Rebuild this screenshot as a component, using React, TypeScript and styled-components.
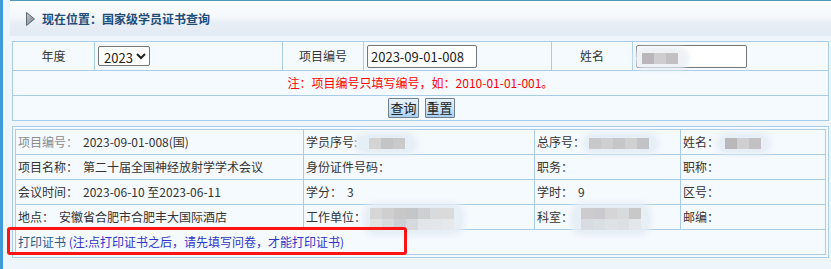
import styled, { createGlobalStyle } from 'styled-components';

const GlobalStyle = createGlobalStyle`
  html, body {
    margin: 0;
    padding: 0;
  }
  body {
    background: #eef5fb;
    font-family: "Microsoft YaHei", "Noto Sans CJK SC", "Noto Sans", sans-serif;
    font-size: 12px;
    color: #333;
  }
`;

const Page = styled.div`
  position: relative;
  min-height: 269px;
  border-left: 3px solid #3f9cd8;
  box-sizing: border-box;
`;

const Header = styled.div`
  display: flex;
  align-items: center;
  gap: 7px;
  height: 35px;
  margin-left: 7px;
  padding-left: 16px;
  border-top: 1px solid #4f9bb6;
  background: linear-gradient(to bottom, #fbfdff 0%, #f4f8fc 45%, #e8eef6 62%, #e2eaf3 100%);
`;

const Title = styled.h1`
  margin: 0;
  font-size: 12px;
  font-weight: bold;
  color: #1e4c78;
  line-height: 16px;
`;

const Content = styled.div`
  padding: 5px 2px 0 9px;
`;

const SearchTable = styled.table`
  width: 100%;
  table-layout: fixed;
  border-collapse: collapse;
  background: #f5faff;
  border: 1px solid #a9cde8;
`;

const Row = styled.tr<{ $h: number }>`
  height: ${p => p.$h}px;
`;

const Cell = styled.td<{ $align?: string }>`
  border: 1px solid #a9cde8;
  padding: 0 3px;
  text-align: ${p => p.$align || 'left'};
  line-height: 16px;
  white-space: nowrap;
  position: relative;
`;

const Note = styled.span`
  color: #ff0000;
`;

const Select = styled.select`
  height: 20px;
  font-family: inherit;
  font-size: 13px;
  color: #222;
  border: 1px solid #767676;
  border-radius: 2px;
  background: #fff;
  padding: 0 0 0 1px;
  vertical-align: middle;
`;

const TextInput = styled.input<{ $w: number }>`
  width: ${p => p.$w}px;
  height: 23px;
  box-sizing: border-box;
  font-family: inherit;
  font-size: 13px;
  color: #222;
  border: 1px solid #767676;
  border-radius: 2px;
  background: #fff;
  padding: 0 3px;
  vertical-align: middle;
`;

const ButtonRow = styled.div`
  display: flex;
  justify-content: center;
  gap: 6px;
  padding-left: 2px;
`;

const Button = styled.button`
  height: 20px;
  padding: 0 1px;
  font-family: inherit;
  font-size: 13px;
  line-height: 16px;
  color: #222;
  border: 1px solid #6f7f8f;
  border-radius: 1px;
  background: linear-gradient(to bottom, #e8f3fd 0%, #cfe5f8 50%, #a8d0f1 100%);
`;

const InfoBox = styled.div`
  margin-top: 5px;
  border: 1px solid #a9cde8;
  padding: 2px;
  background: #f5faff;
`;

const InfoTable = styled.table`
  width: 100%;
  table-layout: fixed;
  border-collapse: collapse;
  border: 1px solid #a3bccf;
`;

const InfoRow = styled.tr`
  height: 25px;
`;

const InfoCell = styled.td`
  border: 1px solid #a9cde8;
  padding: 0 2px;
  line-height: 16px;
  white-space: nowrap;
  overflow: visible;
`;

const Label = styled.span<{ $muted?: boolean }>`
  color: ${p => (p.$muted ? '#8a8a8a' : '#333')};
  margin-right: 5px;
`;

const PrintLink = styled.span`
  color: #2a5a88;
`;

const PrintNote = styled.span`
  color: #2f34c8;
`;

// privacy blur over a value; rows of grey tiles that must not push the row taller
const Mask = styled.span<{ $w: number; $pl: number; $rows?: number }>`
  display: inline-flex;
  flex-wrap: wrap;
  align-content: center;
  width: ${p => p.$w}px;
  height: ${p => (p.$rows || 1) * 11}px;
  margin: ${p => -((p.$rows || 1) * 11 - 10) / 2 - 3}px 0;
  padding: 3px 8px 3px ${p => p.$pl}px;
  vertical-align: middle;
  border-radius: 10px;
  background: rgba(230, 237, 245, 0.9);
  box-shadow: 0 0 5px 3px rgba(230, 237, 245, 0.85);
`;

const Tile = styled.i<{ $c: string }>`
  display: block;
  width: 12px;
  height: 11px;
  background: ${p => p.$c};
  filter: blur(0.4px);
`;

const NameMask = styled(Mask)`
  position: absolute;
  left: 3px;
  top: 8px;
  margin: 0;
  background: rgba(236, 241, 246, 0.9);
`;

const Highlight = styled.div`
  position: absolute;
  left: 4px;
  top: 227px;
  width: 394px;
  height: 22px;
  border: 3px solid #ff1414;
  border-radius: 3px;
  pointer-events: none;
`;

function Arrow() {
  return (
    <svg width="9" height="14" viewBox="0 0 9 14">
      <defs>
        <linearGradient id="ag" x1="0" y1="0" x2="1" y2="1">
          <stop offset="0" stopColor="#c9ced3" />
          <stop offset="1" stopColor="#6d7780" />
        </linearGradient>
      </defs>
      <path d="M0.5 0.5 L8.5 7 L0.5 13.5 Z" fill="url(#ag)" stroke="#5f6a74" strokeWidth="1" strokeLinejoin="round" />
    </svg>
  );
}

function Tiles({ colors }: { colors: string[] }) {
  return (
    <>
      {colors.map((c, i) => (
        <Tile key={i} $c={c} />
      ))}
    </>
  );
}

export default function App() {
  return (
    <Page>
      <GlobalStyle />
      <Header>
        <Arrow />
        <Title>现在位置：国家级学员证书查询</Title>
      </Header>
      <Content>
        <SearchTable>
          <colgroup>
            <col style={{ width: 82 }} />
            <col style={{ width: 188 }} />
            <col style={{ width: 81 }} />
            <col style={{ width: 188 }} />
            <col style={{ width: 81 }} />
            <col />
          </colgroup>
          <tbody>
            <Row $h={29}>
              <Cell $align="center">年度</Cell>
              <Cell>
                <Select defaultValue="2023">
                  <option>2023</option>
                  <option>2022</option>
                  <option>2021</option>
                </Select>
              </Cell>
              <Cell $align="center">项目编号</Cell>
              <Cell>
                <TextInput $w={110} defaultValue="2023-09-01-008" />
              </Cell>
              <Cell $align="center">姓名</Cell>
              <Cell>
                <TextInput $w={111} defaultValue="" />
                <NameMask $w={36} $pl={6}>
                  <Tiles colors={['#b9b5b9', '#d0cdd0', '#c3c0c3']} />
                </NameMask>
              </Cell>
            </Row>
            <Row $h={25}>
              <Cell colSpan={6} $align="center">
                <Note>注：项目编号只填写编号，如：2010-01-01-001。</Note>
              </Cell>
            </Row>
            <Row $h={25}>
              <Cell colSpan={6}>
                <ButtonRow>
                  <Button>查询</Button>
                  <Button>重置</Button>
                </ButtonRow>
              </Cell>
            </Row>
          </tbody>
        </SearchTable>

        <InfoBox>
          <InfoTable>
            <colgroup>
              <col style={{ width: 288 }} />
              <col style={{ width: 231 }} />
              <col style={{ width: 146 }} />
              <col />
            </colgroup>
            <tbody>
              <InfoRow>
                <InfoCell>
                  <Label $muted>项目编号：</Label>2023-09-01-008(国)
                </InfoCell>
                <InfoCell>
                  学员序号:
                  <Mask $w={38} $pl={12}>
                    <Tiles colors={['#d4d4d4', '#c4c4c4', '#cacaca']} />
                  </Mask>
                </InfoCell>
                <InfoCell>
                  总序号：
                  <Mask $w={60} $pl={4}>
                    <Tiles colors={['#c9c9cc', '#cfcfd2', '#c6c6c9', '#d0d0d0', '#c2c3c8']} />
                  </Mask>
                </InfoCell>
                <InfoCell>
                  姓名：
                  <Mask $w={36} $pl={6}>
                    <Tiles colors={['#bab7ba', '#d2cfd2', '#c4c1c4']} />
                  </Mask>
                </InfoCell>
              </InfoRow>
              <InfoRow>
                <InfoCell>
                  <Label>项目名称：</Label>第二十届全国神经放射学学术会议
                </InfoCell>
                <InfoCell>身份证件号码：</InfoCell>
                <InfoCell>职务：</InfoCell>
                <InfoCell>职称：</InfoCell>
              </InfoRow>
              <InfoRow>
                <InfoCell>
                  <Label>会议时间：</Label>2023-06-10 至2023-06-11
                </InfoCell>
                <InfoCell>
                  <Label>学分：</Label>3
                </InfoCell>
                <InfoCell>
                  <Label>学时：</Label>9
                </InfoCell>
                <InfoCell>区号：</InfoCell>
              </InfoRow>
              <InfoRow>
                <InfoCell>
                  <Label>地点：</Label>安徽省合肥市合肥丰大国际酒店
                </InfoCell>
                <InfoCell>
                  工作单位：
                  <Mask $w={84} $pl={4} $rows={2}>
                    <Tiles colors={['#d6d6d6', '#cfcfcf', '#c8c8c8', '#c4c6c8', '#cdd0d3', '#d9dadb', '#dadada', '#e0e2e4', '#d8dadc', '#ccd0d6', '#d6dadf', '#e2e6ea', '#e4e7ea', '#e6e9ec']} />
                  </Mask>
                </InfoCell>
                <InfoCell>
                  科室：
                  <Mask $w={60} $pl={8} $rows={2}>
                    <Tiles colors={['#cdcbcd', '#c9c9cf', '#d5d5d8', '#d9dadc', '#c8c8c8', '#d8dce2', '#dadfe4', '#dde2e6', '#dcdfe3', '#e3e7eb']} />
                  </Mask>
                </InfoCell>
                <InfoCell>邮编：</InfoCell>
              </InfoRow>
              <InfoRow>
                <InfoCell colSpan={4}>
                  <PrintLink>打印证书</PrintLink> <PrintNote>(注:点打印证书之后，请先填写问卷，才能打印证书)</PrintNote>
                </InfoCell>
              </InfoRow>
            </tbody>
          </InfoTable>
        </InfoBox>
      </Content>
      <Highlight />
    </Page>
  );
}
